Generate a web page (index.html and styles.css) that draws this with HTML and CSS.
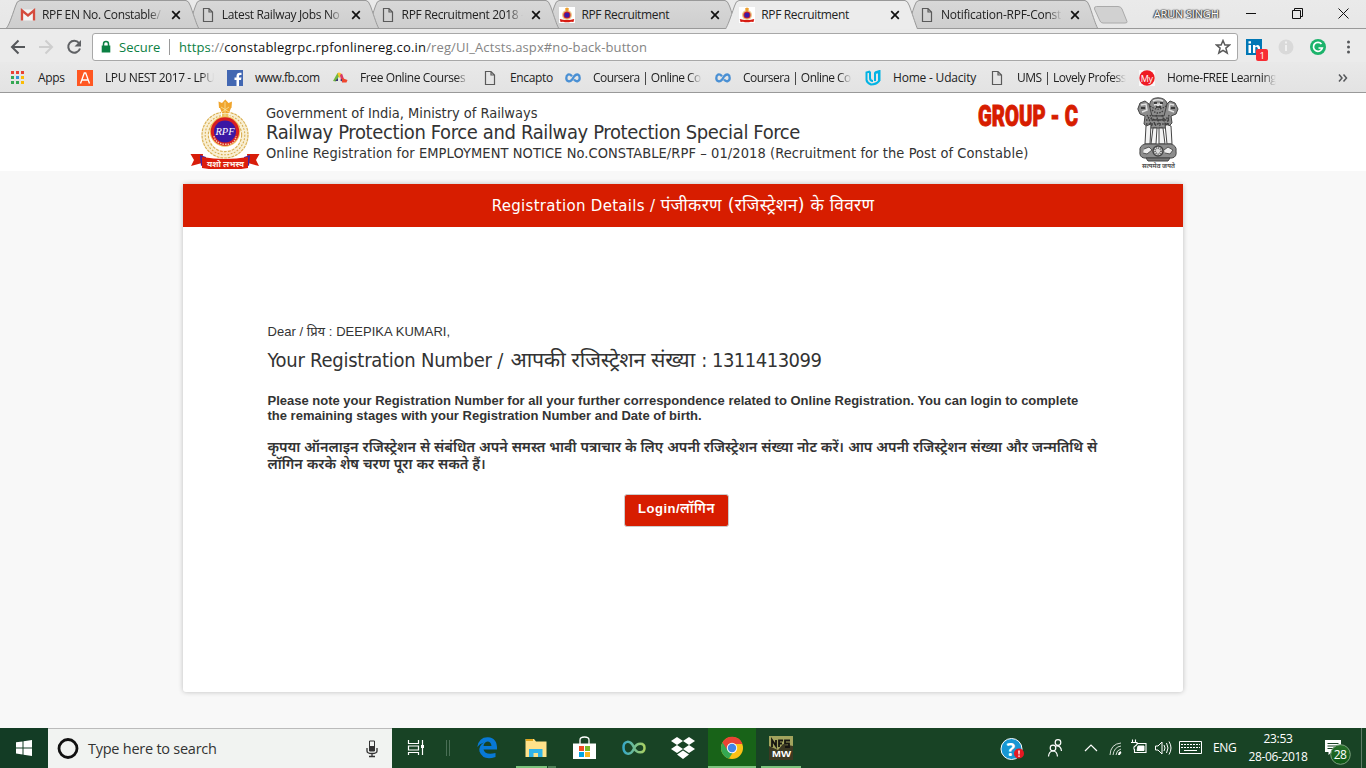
FILE: index.html
```html
<!DOCTYPE html>
<html lang="en">
<head>
<meta charset="utf-8">
<title>RPF Recruitment</title>
<link rel="stylesheet" href="styles.css">
</head>
<body>
<svg class="defs" width="0" height="0">
  <defs>
    <linearGradient id="tabfill" x1="0" y1="0" x2="0" y2="1"><stop offset="0" stop-color="#d8d8d8"/><stop offset="1" stop-color="#cecece"/></linearGradient>
    <linearGradient id="loop" x1="0" x2="1"><stop offset="0" stop-color="#38a9c6"/><stop offset="1" stop-color="#a8cf63"/></linearGradient>
    <linearGradient id="badge" x1="0" y1="0" x2="0" y2="1"><stop offset="0" stop-color="#29722c"/><stop offset="1" stop-color="#0b5614"/></linearGradient>
    <symbol id="tab" viewBox="0 0 194 28"><path d="M.5 28 C3 25 5 19 9.500 6 Q11 .5 14 .5 H180 Q182.500 .5 184.500 6 C189 19 190.500 24 192.500 28" fill="url(#tabfill)" stroke="#999"/></symbol>
    <symbol id="page" viewBox="0 0 12 16"><path d="M1.500 1.500H7L10.500 5V14.500H1.500ZM7 1.500V5H10.500" fill="none" stroke="#5a5a5a" stroke-width="1.200"/></symbol>
    <symbol id="close" viewBox="0 0 10 10"><path d="M1.200 1.200 8.800 8.800M8.800 1.200 1.200 8.800" stroke="#111" stroke-width="1.700"/></symbol>
    <symbol id="coursera" viewBox="0 0 16 10"><path d="M7 3.300C4-.2 1.300 1.700 1.300 5S4.500 9.700 7.200 6.500L9 3.500C12-.2 14.700 1.800 14.700 5S11.500 9.500 9 6.600" fill="none" stroke="#4a90d4" stroke-width="2.300"/></symbol>
    <symbol id="rpfmini" viewBox="0 0 16 16"><path fill="#fff" d="M0 0H16V16H0z"/><circle cx="8" cy="8" r="5" fill="#e9c88c"/><path d="M6 1.500 8 .5 10 1.500 9 4.500H7z" fill="#ed9f2d"/><circle cx="8" cy="8" r="3.600" fill="#d91e20"/><circle cx="8" cy="8" r="2.600" fill="#3b1aa5"/><path d="M.8 12 4 12.700Q8 13.500 12 12.700L15.200 12 14.500 15 12 14.700Q8 16 4 14.700L1.500 15z" fill="#d71c12"/></symbol>
    <symbol id="leafrow" viewBox="-30 -30 60 60"><circle r="22" fill="none" stroke="#f9efd2" stroke-width="9"/><g fill="none" stroke="#d8ae52" stroke-width="1.200"><circle r="25.500" stroke-dasharray="3 1.200"/><circle r="22" stroke-dasharray="2 1.700"/><circle r="18.500" stroke-dasharray="3 1.500"/></g></symbol>
  </defs>
</svg>
<div class="screen">
  <div class="tabstrip">
    <div class="tab z5"><svg class="shape"><use href="#tab"/></svg><svg class="fav" viewBox="0 0 16 16"><path d="M1.500 2.500H14.500V13.500H1.500z" fill="#f3f3f3"/><path d="M2 13.500V3.500L8 8.500 14 3.500V13.500" fill="none" stroke="#d54b3d" stroke-width="2.300"/></svg><span class="label t1">RPF EN No. Constable/</span><svg class="x"><use href="#close"/></svg></div>
    <div class="tab z4"><svg class="shape"><use href="#tab"/></svg><svg class="fav"><use href="#page"/></svg><span class="label t2">Latest Railway Jobs No</span><svg class="x"><use href="#close"/></svg></div>
    <div class="tab z3"><svg class="shape"><use href="#tab"/></svg><svg class="fav"><use href="#page"/></svg><span class="label t3">RPF Recruitment 2018 -</span><svg class="x"><use href="#close"/></svg></div>
    <div class="tab z2"><svg class="shape"><use href="#tab"/></svg><svg class="fav"><use href="#rpfmini"/></svg><span class="label">RPF Recruitment</span><svg class="x"><use href="#close"/></svg></div>
    <div class="tab z6"><svg class="shape" viewBox="0 0 194 29"><path d="M.5 29 C3 25 5 19 9.500 6 Q11 .5 14 .5 H180 Q182.500 .5 184.500 6 C189 19 190.500 24 192.500 29" fill="#ececec" stroke="#999"/></svg><svg class="fav"><use href="#rpfmini"/></svg><span class="label">RPF Recruitment</span><svg class="x"><use href="#close"/></svg></div>
    <div class="tab z1"><svg class="shape"><use href="#tab"/></svg><svg class="fav"><use href="#page"/></svg><span class="label t6">Notification-RPF-Const</span><svg class="x"><use href="#close"/></svg></div>
    <svg class="newtab" viewBox="0 0 36 20"><path d="M3.500 1.500H25Q28 1.500 29 4L34 16.500Q34.500 18 32 18H10Q8 18 7 16L1.500 4Q1 1.500 3.500 1.500Z" fill="#d1d1d1" stroke="#aaa"/></svg>
    <span class="user">ARUN SINGH</span>
    <svg class="winctl" viewBox="0 0 120 28"><path d="M3 13.500H13M49.500 10.500H57.500V18.500H49.500ZM51.500 10.500V8.500H59.500V16.500H57.500M95.500 8.500 105.500 18.500M105.500 8.500 95.500 18.500" fill="none" stroke="#111"/></svg>
  </div>
  <div class="toolbar">
    <svg class="nav" viewBox="0 0 84 34"><g fill="none" stroke-width="2"><path d="M25 18H12M18.500 11.500 12 18 18.500 24.500" stroke="#55575a"/><path d="M39 18H52M45.500 11.500 52 18 45.500 24.500" stroke="#cecece"/><path d="M79 14A6 6 0 1 0 80 19.500" stroke="#5f6164"/></g><path d="M81 11V17.500H74.500z" fill="#5f6164"/></svg>
    <div class="omnibox">
      <svg width="10" height="14" viewBox="0 0 10 14"><path d="M.7 5.500H9.300V12.500H.7z" fill="#0b8043"/><path d="M2.500 6V4a2.500 2.500 0 0 1 5 0V6" fill="none" stroke="#0b8043" stroke-width="1.500"/></svg>
      <span class="secure">Secure</span>
      <span class="url"><span class="https">https</span><span class="grey">://</span><span class="host">constablegrpc.rpfonlinereg.co.in</span><span class="grey">/reg/UI_Actsts.aspx#no-back-button</span></span>
      <svg class="star" viewBox="0 0 16 16"><path d="M8 1.500 9.900 6H14.500L10.900 9.100 12.200 14 8 11.300 3.800 14 5.100 9.100 1.500 6H6.100Z" fill="none" stroke="#5a5a5a" stroke-width="1.500"/></svg>
    </div>
    <svg class="exts" viewBox="0 0 128 34"><path d="M8 11H24V27H8z" fill="#0077b5"/><path d="M10.500 17H13V25H10.500zM10.500 13.300H13V15.500H10.500zM15 17H17.300V18.200Q20.500 15.500 22 19V25H19.800V20Q17.500 17.600 17.300 20V25H15z" fill="#fff"/><rect x="18" y="21" width="12" height="12" rx="2" fill="#f72d34"/><text x="21.500" y="30.700" font-size="9.500" fill="#fff" font-family="Open Sans">1</text><circle cx="48" cy="19" r="7.500" fill="#d9d9d9"/><path d="M47 17H49V23H47zM47 13.500H49V15.500H47z" fill="#f0f0f0"/><circle cx="80" cy="19" r="8" fill="#1cb36b"/><path d="M83.500 16A4.500 4.500 0 1 0 84.300 20H80.500" fill="none" stroke="#fff" stroke-width="1.700"/><g fill="#55575a"><circle cx="110.500" cy="14" r="1.500"/><circle cx="110.500" cy="19" r="1.500"/><circle cx="110.500" cy="24" r="1.500"/></g></svg>
  </div>
  <div class="bookmarks">
    <div class="bm w67"><svg viewBox="0 0 16 16"><g><path d="M1 1H4V4H1zM6 1H9V4H6zM11 1H14V4H11z" fill="#e94234"/><path d="M1 6H4V9H1z" fill="#34a853"/><path d="M6 6H9V9H6z" fill="#3494d9"/><path d="M11 6H14V9H11z" fill="#fbbc05"/><path d="M1 11H4V14H1zM6 11H9V14H6z" fill="#34a853"/><path d="M11 11H14V14H11z" fill="#fbbc05"/></g></svg><span>Apps</span></div>
    <div class="bm w150"><svg viewBox="0 0 16 16"><path fill="#ff5722" d="M0 0H16V16H0z"/><path d="M3.500 13.500 7.300 3H8.700L12.500 13.500M5 10H11" fill="none" stroke="#fff" stroke-width="1.300"/></svg><span class="fade b2">LPU NEST 2017 - LPU</span></div>
    <div class="bm w105"><svg viewBox="0 0 16 16"><path fill="#4267b2" d="M0 0H16V16H0z"/><path d="M12 16V10H14L14.500 7.500H12V6Q12 5 13.300 5H14.500V2.800Q9.500 2 9.500 6V7.500H7.500V10H9.500V16z" fill="#fff"/></svg><span class="b3">www.fb.com</span></div>
    <div class="bm w150"><svg viewBox="0 0 16 16"><path d="M1 11 5.500 3 8 4.500 4 11.500z" fill="#70b83e"/><path d="M5.500 3Q8 1.500 10 5L7.500 8 6 5z" fill="#fbc22d"/><path d="M8 5 10 3.500 12 9 9 10.500z" fill="#d93a65"/><path d="M3 11 6 8V11zM8 10 10 9V11.500z" fill="#383177"/><path d="M10 8 15.500 10 14.500 12.500H10z" fill="#ef472e"/></svg><span class="fade b4">Free Online Courses</span></div>
    <div class="bm w83"><svg viewBox="-2 0 16 16"><use href="#page" width="12" height="16"/></svg><span>Encapto</span></div>
    <div class="bm w150"><svg><use href="#coursera"/></svg><span class="fade b6">Coursera | Online Co</span></div>
    <div class="bm w150"><svg><use href="#coursera"/></svg><span class="fade b6">Coursera | Online Co</span></div>
    <div class="bm w124"><svg viewBox="0 0 16 16"><path d="M5 1.500V8Q5 11 8 11M5 1.500 1.500 2.500V10Q2 13 6 14.500 11 14.500 14 11V2L10 3V11M10 2.500 14.500 1V11" fill="none" stroke="#02b3e4" stroke-width="2"/></svg><span class="b8">Home - Udacity</span></div>
    <div class="bm w150"><svg viewBox="-2 0 16 16"><use href="#page" width="12" height="16"/></svg><span class="fade b9">UMS | Lovely Profess</span></div>
    <div class="bm w150"><svg viewBox="0 0 16 16"><path fill="#f8f8f8" d="M0 0H16V16H0z"/><circle cx="8" cy="8" r="7.700" fill="#ee1b24"/><text x="1.700" y="11.500" font-size="9" fill="#fff" font-family="Open Sans">My</text></svg><span class="fade b10">Home-FREE Learning</span></div>
    <svg class="more" viewBox="0 0 12 10"><path d="M2 1.500 5 5 2 8.500M6.500 1.500 9.500 5 6.500 8.500" fill="none" stroke="#55575a" stroke-width="1.500"/></svg>
  </div>
  <header class="masthead">
    <svg class="rpf" viewBox="0 0 70 70">
      <use href="#leafrow" x="7" y="9" width="56" height="54"/>
      <path d="M31 8H39.500V20H31z" fill="#fff"/>
      <g fill="#f0a52d"><path d="M28.500 2.500 32 4 35.300 .5 38.500 4 42 2.500 41.500 9H29zM30 9H41L39 14H32z"/><path d="M32 14.500H38.500V20H32z" fill="#edc460"/></g>
      <g fill="none" stroke="#fae3a0" stroke-width=".8"><path d="M31 8 39 13M39 8 32 13M35 3V18"/></g>
      <circle cx="35" cy="32.500" r="15.200" fill="#f2c35b"/><circle cx="35" cy="32.500" r="14.200" fill="#d71e22"/><circle cx="35" cy="32.500" r="11" fill="#3a17a4"/>
      <path d="M24 37Q25 44.500 35 45.300T46 37" fill="none" stroke="#f4caa1" stroke-width="1.500" stroke-dasharray="1.500 1"/>
      <text x="25.500" y="36" font-family="Liberation Serif" font-style="italic" font-size="10" textLength="19" lengthAdjust="spacingAndGlyphs" fill="#fff">RPF</text>
      <path d="M.5 55H13L12 64 1 67 4 61zM69.500 55H57L58 64 69 67 66 61z" fill="#d81d0a"/><path d="M10 56 16 58V64L11 67zM60 56 54 58V64L59 67z" fill="#4423a0"/>
      <path d="M12 58Q35 62 58 58V69Q35 73 12 69z" fill="#dc1e0b"/><text x="17" y="68" font-size="7.500" font-weight="700" font-family="Noto Sans Devanagari, sans-serif" textLength="37" lengthAdjust="spacingAndGlyphs" fill="#fff2e8">यशो लभस्व</text>
    </svg>
    <div class="titles">
      <div class="gov">Government of India, Ministry of Railways</div>
      <h1>Railway Protection Force and Railway Protection Special Force</h1>
      <div class="notice">Online Registration for EMPLOYMENT NOTICE No.CONSTABLE/RPF – 01/2018 (Recruitment for the Post of Constable)</div>
    </div>
    <svg class="group" viewBox="0 0 102 30"><text x="1" y="23" font-family="Roboto, sans-serif" font-weight="900" font-size="29" textLength="100" lengthAdjust="spacingAndGlyphs" fill="#d71d00" stroke="#d71d00" stroke-width="1">GROUP - C</text></svg>
    <svg class="ashoka" viewBox="0 0 42 72">
      <g fill="#8d8d8d" stroke="#444" stroke-width="1">
        <path d="M13 6Q14 1 21 .8 28 1 30 6L31 14 27 19H16L11 14z"/>
        <path d="M12 7 8 4 3 6 .8 12 3 17 8 19 7 27 12 31H30L35 26 34 19 39 17 41 12 38 6 33 4 30 7 27 19H15z"/>
        <path d="M9 29 14 27 13 47H8zM16 31H20L19 47H14zM22 31H26L28 47H22zM28 27 34 29 35 47H30z" fill="#f3f3f3"/>
        <path d="M8 47H34Q40 49 39 54 40 60 35 61H7Q2 60 3 54 2 49 8 47z"/><path d="M9 61H33L31 64H11z" fill="#777"/>
      </g>
      <g fill="none" stroke="#3d3d3d" stroke-width="1.300" stroke-dasharray="1.500 1.200"><path d="M13 9Q21 15 29 9M15 13Q21 19 27 13M10 18 15 29M13 18 19 29M19 18 23 29M25 18 29 29M32 18 30 28M9 23H33M9 27H32M11 20Q21 26 32 20"/></g>
      <path d="M16 4Q21 1.500 26 4M4 8 9 7 10 13 5 15M37 8 33 7 32 13 37 15M17 8 20 7 21 10 22 7 25 8" stroke="#e2e2e2" stroke-width="1.400" fill="none"/>
      <path d="M17 6H20M23 6H26M19 10H24M4 11H8M34 11H38" stroke="#222" stroke-width="1.500"/>
      <circle cx="21" cy="54" r="5" fill="#ddd" stroke="#444" stroke-width="1.500"/><circle cx="21" cy="54" r="3" fill="none" stroke="#666" stroke-width="2" stroke-dasharray="1 1"/><path d="M7 52 12 50 15 53 10 57 6 56M27 53 31 50 36 53 33 57 28 56" fill="#eee" stroke="#555"/>
      <text x="5" y="70.500" font-size="6.500" font-weight="700" font-family="Noto Sans Devanagari, sans-serif" textLength="33" lengthAdjust="spacingAndGlyphs" fill="#555">सत्यमेव जयते</text>
    </svg>
  </header>
  <main>
    <section class="card">
      <h2>Registration Details / <span>पंजीकरण (रजिस्ट्रेशन) के विवरण</span></h2>
      <div class="content">
        <p class="dear">Dear / <span>प्रिय</span> : DEEPIKA KUMARI,</p>
        <p class="number">Your Registration Number / <span class="script">आपकी रजिस्ट्रेशन संख्या</span><span class="digits"> : 1311413099</span></p>
        <p class="note">Please note your Registration Number for all your further correspondence related to Online Registration. You can login to complete<br>the remaining stages with your Registration Number and Date of birth.</p>
        <p class="hindi">कृपया ऑनलाइन रजिस्ट्रेशन से संबंधित अपने समस्त भावी पत्राचार के लिए अपनी रजिस्ट्रेशन संख्या नोट करें। आप अपनी रजिस्ट्रेशन संख्या और जन्मतिथि से<br>लॉगिन करके शेष चरण पूरा कर सकते हैं।</p>
        <button>Login/<span>लॉगिन</span></button>
      </div>
    </section>
  </main>
  <footer class="taskbar">
    <div class="start"><svg width="16" height="16" viewBox="0 0 16 16"><path d="M0 2.300 6.500 1.400V7.400H0zM7.500 1.200 16 0V7.400H7.500zM0 8.400H6.500V14.500L0 13.600zM7.500 8.400H16V16L7.500 14.800z" fill="#fff"/></svg></div>
    <div class="search"><svg width="22" height="22" viewBox="0 0 22 22"><circle cx="11" cy="10.500" r="9" fill="none" stroke="#111" stroke-width="2.800"/></svg><span>Type here to search</span><svg class="mic" width="12" height="18" viewBox="0 0 12 18"><path d="M3.500 1H8.500V11H3.500z" fill="none" stroke="#333"/><path d="M3.500 6H8.500V11H3.500z" fill="#333"/><path d="M1 8V11Q1 13.500 6 13.500T11 11V8M6 13.500V16.500M3 16.500H9" fill="none" stroke="#333" stroke-width="1.300"/></svg></div>
    <svg class="apps" viewBox="0 0 428 40">
      <g fill="none" stroke="#fff"><path d="M16.500 12V15.500H26.500V12M16.500 27V24.500H26.500V27M16.500 18H26.500V22H16.500zM30.500 12V27" stroke-width="1.200"/><path d="M29 17H32V20H29z" fill="#fff" stroke="none"/><path d="M54.500 12V28M57.500 12V28" stroke="#4a6f56"/></g>
      <path d="M85.300 19Q87 9 96 9.300 105.500 10 105 21.500H91.500Q93 27.500 103.500 25V29Q91 33 87.500 23.500 86.500 17.500 92 14.500 87.500 15.500 85.300 19M91.500 18H99.500Q99 13.500 95.500 13.500 92 14 91.500 18" fill="#0879d6" fill-rule="evenodd"/>
      <path d="M133.500 11H142L144 13.500H154.500V29H133.500z" fill="#ffe28a"/><path d="M134 11H141V13H134z" fill="#e0a61e"/><path d="M137 29V21H150.500V29H146V25H141.500V29z" fill="#32b4e8"/>
      <path d="M181 15.500H204V31H181z" fill="#fff"/><path d="M188 18V12Q188 9 192.500 9T197 12V18" fill="none" stroke="#fff" stroke-width="1.300"/><path d="M187 18H192V23H187z" fill="#f04b23"/><path d="M193 18H198V23H193z" fill="#7bb928"/><path d="M187 24H192V29H187z" fill="#00a4e4"/><path d="M193 24H198V29H193z" fill="#f7b521"/>
      <path d="M242 19.500C238 11 231.500 13 231.500 19.500S238 29 242 20.500C245 14 252.500 14.500 252.500 20S245 26 242 20" fill="none" stroke="url(#loop)" stroke-width="2.500"/>
      <g fill="#fff"><path d="M285 9 291 13 285 17 279 13zM297 9 303 13 297 17 291 13zM285 17 291 21 285 25 279 21zM297 17 303 21 297 25 291 21zM285 26.500 291 22.500 297 26.500 291 31z"/></g>
      <path d="M316 0H364V40H316z" fill="#186318"/><circle cx="340" cy="20" r="11" fill="#fbc116"/><path d="M340 20 330.500 14.500A11 11 0 0 0 337 30.600L343 21z" fill="#35a853"/><path d="M330.500 14.500A11 11 0 0 1 350.500 16H340L335.500 22z" fill="#ea4335"/><circle cx="340" cy="20" r="5.200" fill="#f8f8f8"/><circle cx="340" cy="20" r="4.200" fill="#4285e8"/>
      <path d="M377 8H401V32H377z" fill="#3c3922"/><path d="M377 8H401V18L391 16 386 22 377 18z" fill="#a2a45e"/><path d="M380 19V12L384 18V12M387 19V12.500H391M387 15.500H390M393 19H397V15.500H393V12.500H398" fill="none" stroke="#161611" stroke-width="1.800"/><text x="380" y="29" font-family="Liberation Sans" font-weight="700" font-size="9" fill="#fff" textLength="19" lengthAdjust="spacingAndGlyphs">MW</text>
      <path d="M124 38H155V40H124zM316 38H364V40H316zM369 38H409V40H369z" fill="#7dc47e"/><path d="M156 38H164V40H156z" fill="#4e8057"/>
    </svg>
    <svg class="tray" viewBox="0 0 216 40">
      <circle cx="21.500" cy="21" r="10.500" fill="#1797d4" stroke="#fff"/><text x="16.500" y="27.500" font-family="Open Sans" font-size="18" font-weight="700" fill="#fff">?</text><circle cx="29" cy="25.500" r="5" fill="#e51922"/><path d="M28.200 22.500H29.800L29.500 26.500H28.500zM28.200 27.500H29.800V28.800H28.200z" fill="#fff"/>
      <g fill="none" stroke="#fff" stroke-width="1.200"><circle cx="63" cy="20" r="2.800"/><path d="M58.500 28.500Q59 23 63 23T67.500 28.500"/><circle cx="68" cy="14.500" r="2.800"/><path d="M66 18Q71 17.500 71.500 23"/><path d="M95 23 101 17 107 23"/></g>
      <g fill="none" stroke="#d4ded5"><path d="M120 27Q120.500 16 131 15M123 27Q124 19 131 18M126 27Q126.500 22 131 21"/><path d="M129 27Q129 25 131 24" stroke="#fff" stroke-width="2"/></g>
      <g fill="none" stroke="#fff"><path d="M147.500 15.500H156V24.500H144.500V21M142.500 11.500V14M145.500 11.500V14M141 14.500H147V16.500L144 19V21.500" stroke-width="1.100"/><path d="M148 18H154V22.500H147z" fill="#fff"/><path d="M165.500 18H168L172 14V26L168 22H165.500zM174 17Q176 20 174 23M176.500 15Q179.500 20 176.500 25M179 13.500Q183 20 179 26.500"/></g>
      <path d="M189.500 13.500H211.500V25.500H189.500z" fill="none" stroke="#fff"/><path d="M191 16.500H210M191 19.500H210" stroke="#fff" stroke-dasharray="2 1"/><path d="M194 22.500H207" stroke="#fff"/>
    </svg>
    <span class="lang">ENG</span>
    <div class="clock"><span>23:53</span><span class="date">28-06-2018</span></div>
    <svg class="notif" viewBox="0 0 48 40"><path d="M7 12H23V24H14L10.500 27V24H7z" fill="#fff"/><path d="M9.500 15.500H20.500M9.500 18H20.500M9.500 20.500H18" stroke="#184325"/><circle cx="22.500" cy="26.500" r="9.800" fill="url(#badge)" stroke="#7da17f"/><text x="15.800" y="30.500" font-family="Open Sans" font-size="12" fill="#fff" textLength="13">28</text><path d="M43.500 0V40" stroke="#607b67"/></svg>
  </footer>
</div>
</body>
</html>
```

FILE: styles.css
```css
* { box-sizing: border-box; }
body { margin: 0; font-family: "Open Sans", "Noto Sans", sans-serif; }
p, h1, h2 { margin: 0; font-weight: 400; }
.defs { position: absolute; }
svg { flex: none; display: block; }
.screen { width: 1366px; height: 768px; overflow: hidden; display: flex; flex-direction: column; background: #f8f8f8; }
.tabstrip { height: 29px; flex: none; display: flex; padding-left: 6px; background: linear-gradient(#eaeaea, #e7e7e7); border-bottom: 1px solid #999; }
.tab { width: 179.800px; height: 28px; position: relative; display: flex; align-items: center; padding: 2px 0 0 14px; flex: none; }
.shape { position: absolute; left: 0; top: 0; width: 194px; height: 28px; z-index: -1; overflow: visible; }
.z1 { z-index: 1; } .z2 { z-index: 2; } .z3 { z-index: 3; } .z4 { z-index: 4; } .z5 { z-index: 5; } .z6 { z-index: 6; }
.z6 .shape { height: 29px; }
.fav { width: 16px; height: 16px; }
.label { width: 121px; margin-left: 6px; overflow: hidden; white-space: nowrap; font-size: 12px; letter-spacing: -.34px; color: #222; line-height: 18px; }
.t1, .t2, .t3, .t6, .fade { -webkit-mask-image: linear-gradient(90deg, #000 88%, transparent 100%); mask-image: linear-gradient(90deg, #000 88%, transparent 100%); }
.x { width: 10px; height: 10px; margin-left: 8px; }
.t6 { letter-spacing: -.25px; }
.newtab { width: 36px; height: 20px; margin: 5px 0 0 8px; }
.user { margin: 7px 0 0 25px; font-size: 11px; line-height: 14px; letter-spacing: -.15px; color: #fff; text-shadow: 0 0 1px #333, 0 0 2px #333, 1px 0 1px #444, -1px 0 1px #444; white-space: nowrap; width: 68px; }
.winctl { width: 120px; height: 28px; margin-left: 21px; }
.toolbar { height: 33px; flex: none; display: flex; background: #ebebeb; }
.nav { width: 84px; height: 34px; }
.omnibox { width: 1146px; height: 28px; margin: 4px 0 0 8px; border: 1px solid #a8a8a8; border-radius: 3px; background: #fff; display: flex; align-items: center; padding: 0 6px 0 8px; font-size: 13px; white-space: nowrap; color: #111; }
.secure { color: #0b8043; margin-left: 8px; width: 51px; border-right: 1px solid #999; line-height: 16px; letter-spacing: 0; }
.url { margin-left: 9px; letter-spacing: .1px; }
.host { letter-spacing: .2px; }
.https { color: #0b8043; }
.grey { color: #848484; }
.star { width: 16px; height: 16px; margin-left: auto; }
.exts { width: 128px; height: 34px; margin-top: -1px; }
.bookmarks { height: 31px; flex: none; display: flex; align-items: center; padding: 1px 0 0 10px; background: linear-gradient(#e9e9e9, #e3e3e3); border-bottom: 1px solid #999; }
.bm { display: flex; align-items: center; font-size: 12px; letter-spacing: -.34px; color: #222; white-space: nowrap; flex: none; }
.bm svg { width: 16px; height: 16px; margin-right: 12px; }
.fade { width: 109px; overflow: hidden; }
.b2 { letter-spacing: -.4px; }
.b3 { letter-spacing: -.5px; }
.b4 { letter-spacing: -.4px; }
.b6 { letter-spacing: -.55px; }
.b8 { letter-spacing: -.2px; }
.b9 { letter-spacing: -.5px; }
.b10 { letter-spacing: -.4px; }
.w67 { width: 67px; } .w150 { width: 150px; } .w105 { width: 105px; } .w83 { width: 83px; } .w124 { width: 124px; }
.more { width: 12px; height: 10px; margin-left: 48px; }
.masthead { height: 78px; flex: none; background: #fff; display: flex; padding-left: 190px; color: #333; }
.rpf { width: 70px; height: 70px; margin-top: 6px; }
.titles { width: 718px; margin: 11px 0 0 6px; white-space: nowrap; font-family: "DejaVu Sans Condensed", "DejaVu Sans", sans-serif; font-stretch: condensed; }
.gov { font-size: 14.500px; line-height: 18px; letter-spacing: -.02px; }
h1 { font-size: 20px; line-height: 20px; letter-spacing: -.37px; }
.notice { font-size: 14.500px; line-height: 22px; letter-spacing: .08px; }
.group { width: 102px; height: 30px; margin: 10px 0 0 -7px; overflow: visible; }
.ashoka { width: 42px; height: 72px; margin: 4px 0 0 57.500px; overflow: visible; }
main { flex: 1; padding: 13px 183px 36px; }
.card { height: 508px; background: #fff; border-radius: 3px; box-shadow: 0 0 5px rgba(0,0,0,.24); }
h2 { height: 43px; background: #d71d00; color: #fff; text-align: center; font: 15px/45px "DejaVu Sans", "Noto Sans Devanagari", sans-serif; letter-spacing: .3px; white-space: nowrap; }
h2 span { font-size: 17.300px; line-height: 20px; }
.content { padding: 96px 0 0 84.500px; color: #333; display: flex; flex-direction: column; align-items: flex-start; white-space: nowrap; font-family: "Liberation Sans", "Noto Sans Devanagari", sans-serif; font-size: 13px; }
.dear { height: 18px; line-height: 18px; letter-spacing: .04px; }
.number { margin-top: 6px; height: 26px; font: 20px/26px "DejaVu Sans Condensed", "Noto Sans Devanagari", sans-serif; font-stretch: condensed; letter-spacing: -.25px; }
.script { font-size: 21.300px; line-height: 20px; margin-left: 2px; }
.digits { letter-spacing: -.5px; margin-left: 1px; }
.note { margin-top: 20px; font-weight: 700; line-height: 15px; }
.hindi { margin-top: 16px; font-weight: 600; font-size: 14.310px; line-height: 17px; height: 34px; }
button { width: 105px; height: 33px; margin: 21px 0 0 356.500px; padding: 0 0 1px; border: 1px solid #ccc; border-radius: 3px; background: #d71d00; color: #fff; font: 700 13px "Liberation Sans", "Noto Sans Devanagari", sans-serif; letter-spacing: .5px; }
button span { font-weight: 600; font-size: 13.500px; }
.taskbar { height: 40px; flex: none; display: flex; background: #184325; color: #fff; }
.start { width: 48px; display: flex; align-items: center; justify-content: center; background: #133c25; }
.search { width: 344px; display: flex; align-items: center; background: #f1f3f1; color: #333; padding: 0 14px 0 9px; font-size: 14.500px; border-top: 1px solid #bbb; white-space: nowrap; }
.search span { margin-left: 9px; letter-spacing: -.25px; }
.mic { margin-left: auto; }
.apps { width: 428px; height: 40px; }
.tray { width: 216px; height: 40px; margin-left: 170px; }
.lang { margin-left: 7px; width: 26px; font-size: 12px; line-height: 40px; letter-spacing: -.4px; }
.clock { width: 68px; margin-left: 5px; display: flex; flex-direction: column; align-items: center; font-size: 12px; line-height: 18px; padding-top: 2px; letter-spacing: -.35px; white-space: nowrap; }
.notif { width: 48px; height: 40px; margin-left: 6px; }
```
